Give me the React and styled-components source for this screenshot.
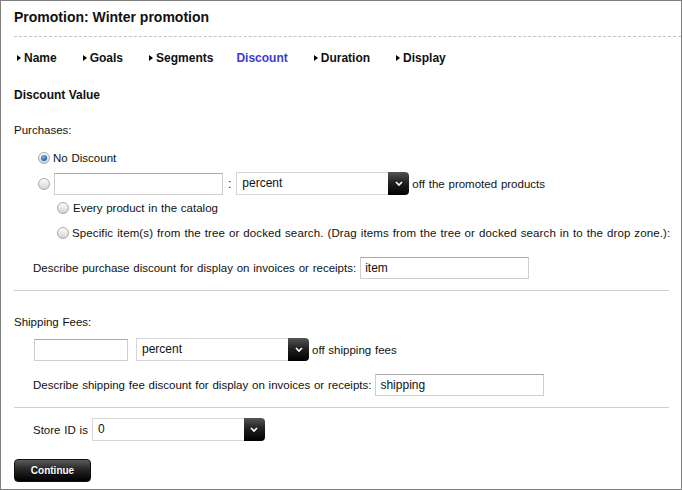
import React from 'react';
import styled, { createGlobalStyle } from 'styled-components';

const Global = createGlobalStyle`
  html, body {
    margin: 0;
    padding: 0;
    background: #fff;
  }
  * { box-sizing: border-box; }
`;

const Frame = styled.div`
  width: 682px;
  height: 490px;
  border: 1px solid #808080;
  padding-left: 13px;
  font-family: 'Liberation Sans', Arial, sans-serif;
  font-size: 11.5px;
  word-spacing: 0.6px;
  color: #111;
  overflow: hidden;
`;

const Header = styled.div`
  padding-top: 8px;
  padding-bottom: 11px;
  border-bottom: 1px dashed #c4c4c4;
`;

const Title = styled.h1`
  margin: 0;
  font-size: 14px;
  line-height: 16px;
  font-weight: bold;
  word-spacing: 0;
  color: #111;
`;

const Body = styled.div`
  padding-right: 12px;
`;

const Tabs = styled.div`
  display: flex;
  gap: 26px;
  margin-top: 13px;
  padding-left: 3px;
`;

const Tab = styled.div`
  display: flex;
  align-items: center;
  gap: 3px;
  margin-left: ${(p) => (p.$active ? '-3px' : '0')};
  font-size: 12px;
  line-height: 16px;
  font-weight: bold;
  word-spacing: 0;
  color: ${(p) => (p.$active ? '#3b3bd6' : '#111')};
`;

const Arrow = styled.span`
  width: 0;
  height: 0;
  border-top: 3.5px solid transparent;
  border-bottom: 3.5px solid transparent;
  border-left: 4px solid #000;
`;

const SectionTitle = styled.h2`
  margin: 21px 0 0;
  font-size: 12px;
  line-height: 16px;
  font-weight: bold;
  word-spacing: 0;
`;

const Label = styled.div`
  margin-top: ${(p) => p.$mt}px;
  line-height: 14px;
`;

const Row = styled.div`
  display: flex;
  align-items: center;
  margin-top: ${(p) => p.$mt}px;
  padding-left: ${(p) => p.$indent}px;
  min-height: 14px;
  line-height: 14px;
  white-space: nowrap;
  letter-spacing: ${(p) => p.$track ?? 0}px;
`;

const Radio = styled.span`
  position: relative;
  flex: none;
  width: 12px;
  height: 12px;
  margin-right: ${(p) => p.$gap ?? 3}px;
  border-radius: 50%;
  border: 1px solid #a8a8a8;
  background: linear-gradient(#fdfdfd, #d4d4d4);

  &::after {
    content: '';
    display: ${(p) => (p.$checked ? 'block' : 'none')};
    position: absolute;
    left: 2px;
    top: 2px;
    width: 6px;
    height: 6px;
    border-radius: 50%;
    background: radial-gradient(circle at 40% 35%, #7fb6ee, #1e5fa8 70%);
  }
`;

const TextInput = styled.div`
  flex: none;
  width: ${(p) => p.$w}px;
  height: 22px;
  border: 1px solid #cfcfcf;
  border-top-color: #a8a8a8;
  background: #fff;
  padding: 0 4px;
  font-size: 12px;
  line-height: 20px;
  word-spacing: 0;
  color: #111;
`;

const Colon = styled.span`
  margin: 0 5px 0 5px;
  font-size: 12px;
`;

const Select = styled.div`
  flex: none;
  display: flex;
  width: ${(p) => p.$w}px;
  height: 23px;
`;

const SelectValue = styled.div`
  flex: 1;
  border: 1px solid #d6d6d6;
  border-right: none;
  background: #fff;
  padding: 0 5px;
  font-size: 12px;
  line-height: 21px;
  word-spacing: 0;
`;

const SelectButton = styled.div`
  width: 21px;
  display: flex;
  align-items: center;
  justify-content: center;
  border-radius: 0 4px 4px 0;
  background: linear-gradient(#555 0%, #222 45%, #000 100%);
`;

const After = styled.span`
  margin-left: 3px;
`;

const Described = styled.span`
  margin-right: 4px;
`;

const Spacer = styled.span`
  width: ${(p) => p.$w}px;
`;

const Rule = styled.div`
  margin-top: 11px;
  border-top: 1px solid #cfcfcf;
`;

const Button = styled.button`
  display: block;
  margin-top: 18px;
  width: 77px;
  height: 23px;
  border: 1px solid #111;
  border-radius: 4px;
  background: linear-gradient(#5a5a5a 0%, #262626 45%, #000 100%);
  color: #fff;
  font-family: 'Liberation Sans', Arial, sans-serif;
  font-size: 10px;
  font-weight: bold;
  text-shadow: 0 1px 1px #000;
  padding: 0;
  cursor: pointer;
`;

function Dropdown({ width, value }) {
  return (
    <Select $w={width}>
      <SelectValue>{value}</SelectValue>
      <SelectButton>
        <svg width="8" height="5" viewBox="0 0 8 5">
          <path d="M1 1 L4 4 L7 1" fill="none" stroke="#fff" strokeWidth="1.7" />
        </svg>
      </SelectButton>
    </Select>
  );
}

const tabs = ['Name', 'Goals', 'Segments', 'Discount', 'Duration', 'Display'];

export default function App() {
  return (
    <>
      <Global />
      <Frame>
        <Header>
          <Title>Promotion: Winter promotion</Title>
        </Header>
        <Body>
          <Tabs>
            {tabs.map((t) =>
              t === 'Discount' ? (
                <Tab key={t} $active>
                  {t}
                </Tab>
              ) : (
                <Tab key={t}>
                  <Arrow />
                  {t}
                </Tab>
              )
            )}
          </Tabs>

          <SectionTitle>Discount Value</SectionTitle>

          <Label $mt={20}>Purchases:</Label>
          <Row $mt={14} $indent={24}>
            <Radio $checked />
            No Discount
          </Row>
          <Row $mt={7} $indent={24}>
            <Radio $gap={4} />
            <TextInput $w={169} />
            <Colon>:</Colon>
            <Dropdown width={173} value="percent" />
            <After>off the promoted products</After>
          </Row>
          <Row $mt={6} $indent={43}>
            <Radio $gap={4} />
            Every product in the catalog
          </Row>
          <Row $mt={11} $indent={43} $track={0.12}>
            <Radio />
            Specific item(s) from the tree or docked search. (Drag items from the tree or docked search in to the drop zone.):
          </Row>
          <Row $mt={17} $indent={19}>
            <Described>Describe purchase discount for display on invoices or receipts:</Described>
            <TextInput $w={169}>item</TextInput>
          </Row>
          <Rule />

          <Label $mt={24}>Shipping Fees:</Label>
          <Row $mt={9} $indent={20}>
            <TextInput $w={94} />
            <Spacer $w={8} />
            <Dropdown width={173} value="percent" />
            <After>off shipping fees</After>
          </Row>
          <Row $mt={13} $indent={19}>
            <Described>Describe shipping fee discount for display on invoices or receipts:</Described>
            <TextInput $w={169}>shipping</TextInput>
          </Row>
          <Rule />

          <Row $mt={10} $indent={19}>
            <Described>Store ID is</Described>
            <Dropdown width={173} value="0" />
          </Row>

          <Button>Continue</Button>
        </Body>
      </Frame>
    </>
  );
}
